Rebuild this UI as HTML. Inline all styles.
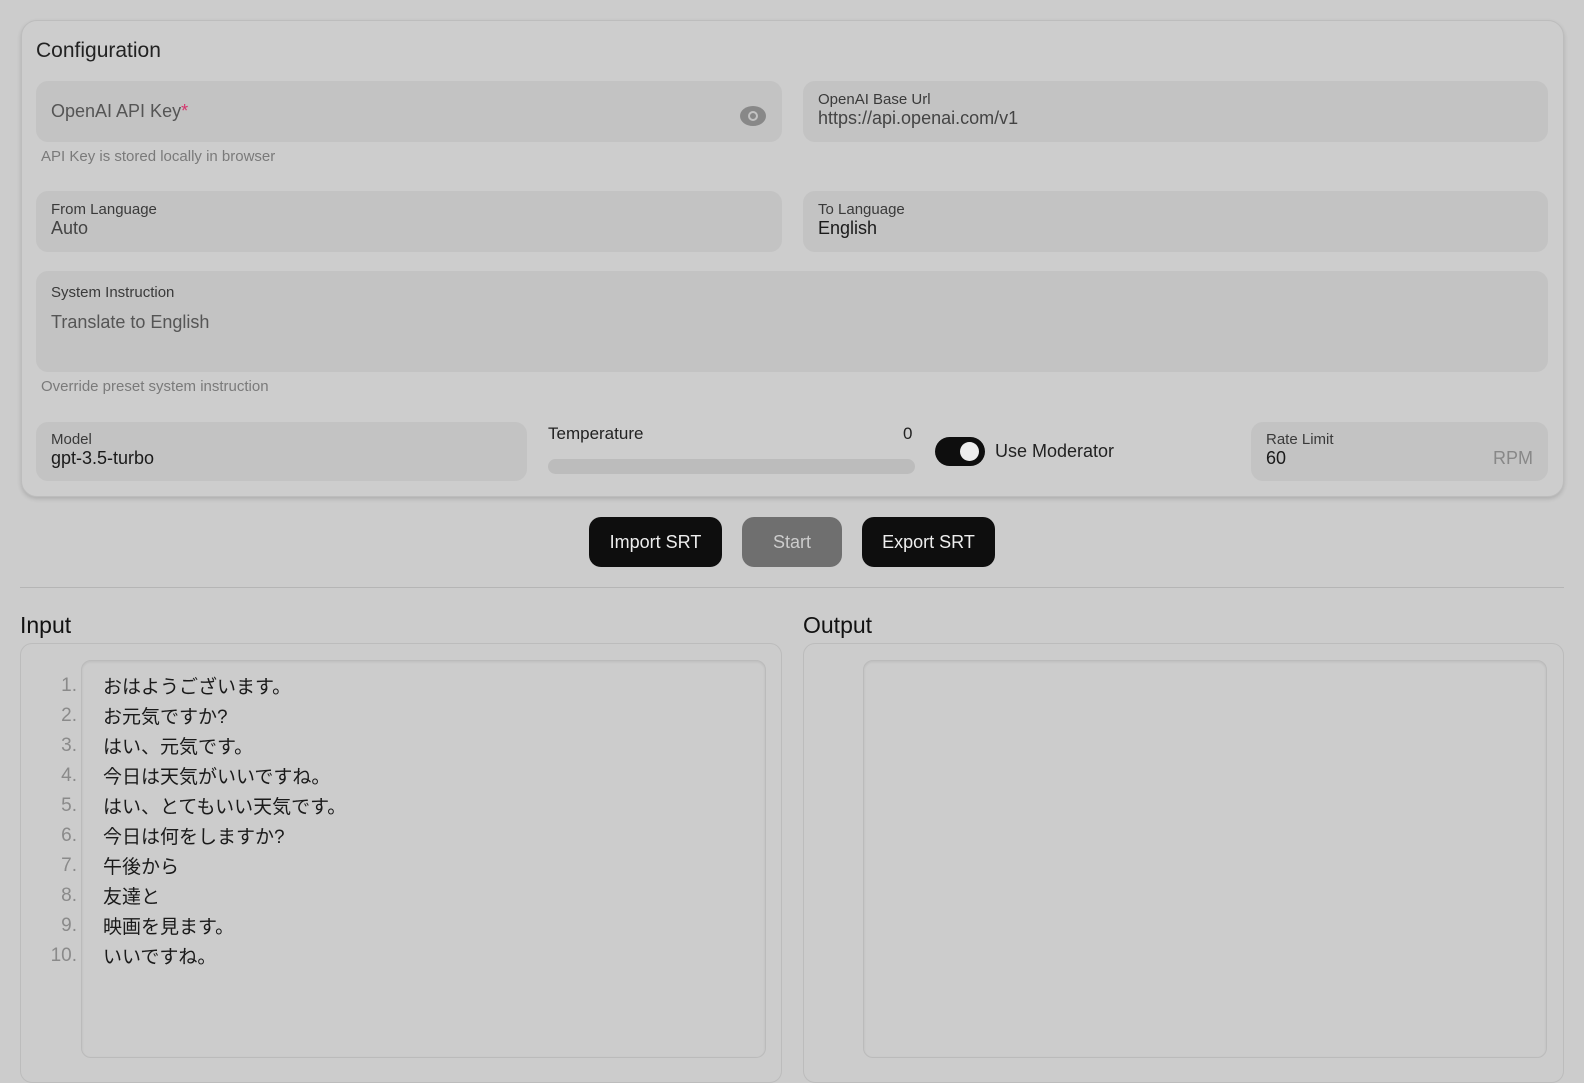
<!DOCTYPE html>
<html><head><meta charset="utf-8"><style>
*{box-sizing:border-box;margin:0;padding:0}
body{width:1584px;height:1070px;background:#cccccc;font-family:"Liberation Sans","Noto Sans CJK JP",sans-serif;color:#111;position:relative;overflow:hidden}
.abs{position:absolute}
.card{left:21px;top:20px;width:1543px;height:477px;border:1px solid #bdbdbd;border-radius:16px;background:#cdcdcd;box-shadow:0 2px 4px rgba(0,0,0,.15)}
.f{position:absolute;background:#c3c3c3;border-radius:12px}
.lbl{position:absolute;left:15px;font-size:15px;color:#3a3a3a}
.val{position:absolute;left:15px;font-size:18px;color:#1a1a1a}
.help{position:absolute;font-size:15px;color:#7a7a7a}
.btn{position:absolute;top:517px;height:50px;border-radius:12px;background:#0e0e0e;color:#eee;font-size:18px;display:flex;align-items:center;justify-content:center}
.panel{position:absolute;top:643px;height:440px;border:1px solid #bcbcbc;border-radius:12px}
.ta{position:absolute;top:660px;height:398px;border:1px solid #bbb;border-radius:10px;box-shadow:inset 0 1px 2px rgba(0,0,0,.08)}
.ln{position:absolute;left:0;width:77px;text-align:right;font-size:19px;color:#8a8a8a;margin-top:3px}
.tx{position:absolute;left:103px;font-size:19px;color:#1a1a1a}
</style></head><body>
<div class="abs card"></div>
<div class="abs" style="left:36px;top:39px;font-size:21px;color:#222">Configuration</div>

<div class="f" style="left:36px;top:81px;width:746px;height:61px">
 <div class="val" style="top:20px;color:#555">OpenAI API Key<span style="color:#d6336c">*</span></div>
 <div style="position:absolute;left:704px;top:25px;width:26px;height:20px;border-radius:50%;background:#888"><div style="position:absolute;left:8px;top:5px;width:10px;height:10px;border:2px solid #c3c3c3;border-radius:50%"></div></div>
</div>
<div class="help" style="left:41px;top:148px">API Key is stored locally in browser</div>
<div class="f" style="left:803px;top:81px;width:745px;height:61px">
 <div class="lbl" style="top:10px">OpenAI Base Url</div>
 <div class="val" style="top:27px;color:#444">https://api.openai.com/v1</div>
</div>

<div class="f" style="left:36px;top:191px;width:746px;height:61px">
 <div class="lbl" style="top:10px">From Language</div>
 <div class="val" style="top:27px;color:#444">Auto</div>
</div>
<div class="f" style="left:803px;top:191px;width:745px;height:61px">
 <div class="lbl" style="top:10px">To Language</div>
 <div class="val" style="top:27px">English</div>
</div>

<div class="f" style="left:36px;top:271px;width:1512px;height:101px">
 <div class="lbl" style="top:13px">System Instruction</div>
 <div class="val" style="top:41px;color:#555">Translate to English</div>
</div>
<div class="help" style="left:41px;top:378px">Override preset system instruction</div>

<div class="f" style="left:36px;top:422px;width:491px;height:59px">
 <div class="lbl" style="top:9px">Model</div>
 <div class="val" style="top:26px">gpt-3.5-turbo</div>
</div>
<div class="abs" style="left:548px;top:424px;font-size:17px;color:#222">Temperature</div>
<div class="abs" style="left:903px;top:424px;font-size:17px;color:#222">0</div>
<div class="abs" style="left:548px;top:459px;width:367px;height:15px;border-radius:8px;background:#bcbcbc"></div>
<div class="abs" style="left:935px;top:437px;width:50px;height:29px;border-radius:15px;background:#0e0e0e"><div style="position:absolute;left:25px;top:5px;width:19px;height:19px;border-radius:50%;background:#eee"></div></div>
<div class="abs" style="left:995px;top:441px;font-size:18px;color:#222">Use Moderator</div>
<div class="f" style="left:1251px;top:422px;width:297px;height:59px">
 <div class="lbl" style="top:9px">Rate Limit</div>
 <div class="val" style="top:26px">60</div>
 <div style="position:absolute;right:15px;top:26px;font-size:18px;color:#888">RPM</div>
</div>

<div class="btn" style="left:589px;width:133px">Import SRT</div>
<div class="btn" style="left:742px;width:100px;background:#6f6f6f;color:#ccc">Start</div>
<div class="btn" style="left:862px;width:133px">Export SRT</div>

<div class="abs" style="left:20px;top:587px;width:1544px;height:1px;background:#b5b5b5"></div>
<div class="abs" style="left:20px;top:612px;font-size:23px;color:#111">Input</div>
<div class="abs" style="left:803px;top:612px;font-size:23px;color:#111">Output</div>
<div class="panel" style="left:20px;width:762px"></div>
<div class="panel" style="left:803px;width:761px"></div>
<div class="ta" style="left:81px;width:685px"></div>
<div class="ta" style="left:863px;width:684px"></div>

<div class="abs" style="left:0;top:672px;width:800px;height:320px">
<div class="ln" style="top:0">1.</div><div class="tx" style="top:0">おはようございます。</div>
<div class="ln" style="top:30px">2.</div><div class="tx" style="top:30px">お元気ですか?</div>
<div class="ln" style="top:60px">3.</div><div class="tx" style="top:60px">はい、元気です。</div>
<div class="ln" style="top:90px">4.</div><div class="tx" style="top:90px">今日は天気がいいですね。</div>
<div class="ln" style="top:120px">5.</div><div class="tx" style="top:120px">はい、とてもいい天気です。</div>
<div class="ln" style="top:150px">6.</div><div class="tx" style="top:150px">今日は何をしますか?</div>
<div class="ln" style="top:180px">7.</div><div class="tx" style="top:180px">午後から</div>
<div class="ln" style="top:210px">8.</div><div class="tx" style="top:210px">友達と</div>
<div class="ln" style="top:240px">9.</div><div class="tx" style="top:240px">映画を見ます。</div>
<div class="ln" style="top:270px">10.</div><div class="tx" style="top:270px">いいですね。</div>
</div>
</body></html>
